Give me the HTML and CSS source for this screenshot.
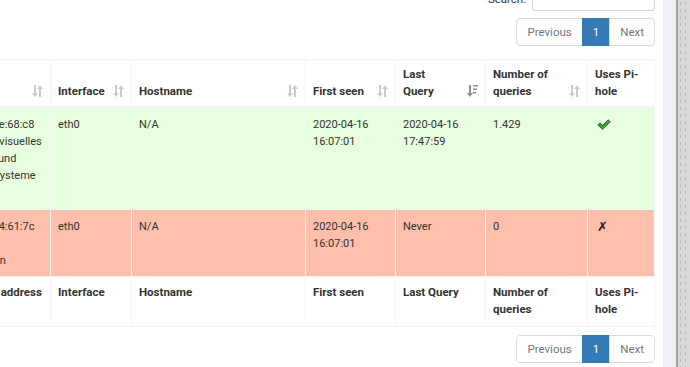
FILE: index.html
```html
<!DOCTYPE html>
<html>
  <head>
    <meta charset="UTF-8">
    <title>Network overview</title>
    <link rel="stylesheet" href="styles.css">
  </head>
  <body>
    <div class="screen">
      <div class="page">
        <div class="filter">
          <label for="search">Search:</label>
          <input type="search" id="search">
        </div>

        <div class="pager-row">
          <div class="pager">
            <span class="page-link">Previous</span>
            <span class="page-link active">1</span>
            <span class="page-link">Next</span>
          </div>
        </div>

        <div class="table-wrap">
          <table class="network">
            <colgroup>
              <col class="c-mac">
              <col class="c-iface">
              <col class="c-host">
              <col class="c-first">
              <col class="c-last">
              <col class="c-count">
              <col class="c-pihole">
            </colgroup>
            <thead>
              <tr>
                <th class="sort">Hardware<br>address
                  <svg class="sort-icon" viewBox="0 0 11 12"><path d="M2 0h2v8h2l-3 4-3-4h2zM7 12h2V4h2L8 0 5 4h2z"/></svg>
                </th>
                <th class="sort">Interface
                  <svg class="sort-icon" viewBox="0 0 11 12"><path d="M2 0h2v8h2l-3 4-3-4h2zM7 12h2V4h2L8 0 5 4h2z"/></svg>
                </th>
                <th class="sort">Hostname
                  <svg class="sort-icon" viewBox="0 0 11 12"><path d="M2 0h2v8h2l-3 4-3-4h2zM7 12h2V4h2L8 0 5 4h2z"/></svg>
                </th>
                <th class="sort">First seen
                  <svg class="sort-icon" viewBox="0 0 11 12"><path d="M2 0h2v8h2l-3 4-3-4h2zM7 12h2V4h2L8 0 5 4h2z"/></svg>
                </th>
                <th class="sort">Last<br>Query
                  <svg class="sort-icon active" viewBox="0 0 11 12"><path d="M2 0h2v8h2l-3 4-3-4h2zM6 0h5v1.6H6zM6 3.4h4V5H6zM6 6.8h3v1.6H6z"/></svg>
                </th>
                <th class="sort">Number of<br>queries
                  <svg class="sort-icon" viewBox="0 0 11 12"><path d="M2 0h2v8h2l-3 4-3-4h2zM7 12h2V4h2L8 0 5 4h2z"/></svg>
                </th>
                <th>Uses Pi-<br>hole</th>
              </tr>
            </thead>
            <tbody>
              <tr class="recent">
                <td class="mac">00:0c:29:4e:68:c8<br>Geräte für visuelles<br>Bild, Töne und<br>Netzwerksysteme</td>
                <td>eth0</td>
                <td>N/A</td>
                <td>2020-04-16<br>16:07:01</td>
                <td>2020-04-16<br>17:47:59</td>
                <td>1.429</td>
                <td>
                  <svg class="yes" viewBox="0 0 13 10"><path d="M0.8 5.4l2-1.9 2.4 2.3L10.3.6l2 1.9-7.1 7z"/></svg>
                </td>
              </tr>
              <tr class="never">
                <td class="mac">00:0c:29:a4:61:7c<br>Intel<br>Corporation</td>
                <td>eth0</td>
                <td>N/A</td>
                <td>2020-04-16<br>16:07:01</td>
                <td>Never</td>
                <td>0</td>
                <td><span class="no">&#x2717;</span></td>
              </tr>
            </tbody>
            <tfoot>
              <tr>
                <th>Hardware address</th>
                <th>Interface</th>
                <th>Hostname</th>
                <th>First seen</th>
                <th>Last Query</th>
                <th>Number of<br>queries</th>
                <th>Uses Pi-<br>hole</th>
              </tr>
            </tfoot>
          </table>
        </div>

        <div class="pager-row bottom">
          <div class="pager">
            <span class="page-link">Previous</span>
            <span class="page-link active">1</span>
            <span class="page-link">Next</span>
          </div>
        </div>
      </div>
      <div class="gutter"></div>
      <div class="edge"></div>
      <div class="texture"></div>
    </div>
  </body>
</html>
```

FILE: styles.css
```css
/* Page frame */
body {
  margin: 0;
  background-color: #ffffff;
  color: #333333;
  font-family: Roboto, 'Liberation Sans', sans-serif;
  font-size: 11px;
  line-height: 17px;
}

.screen {
  display: flex;
  height: 367px;
  overflow: hidden;
}

.page {
  flex: 0 0 662px;
  box-sizing: border-box;
  padding-right: 8px;
  background-color: #ffffff;
}

.gutter {
  flex: 0 0 13px;
  background-color: #edf0f4;
}

.edge {
  flex: 0 0 2px;
  background-color: #a3a3a3;
}

.texture {
  flex: 1;
  background-color: #d9d9d9;
  background-image: radial-gradient(#b8b8b8 0.8px, transparent 1px);
  background-size: 5px 7px;
}

/* Search box */
.filter {
  display: flex;
  justify-content: flex-end;
  align-items: flex-end;
  gap: 6px;
  height: 30px;
  margin-top: -19px;
}

.filter label {
  padding-bottom: 3px;
  font-size: 11.5px;
}

.filter input {
  box-sizing: border-box;
  width: 123px;
  height: 30px;
  border: 1px solid #d2d6de;
  border-radius: 3px;
}

/* Pagination */
.pager-row {
  display: flex;
  justify-content: flex-end;
  margin-top: 7px;
}

.pager-row.bottom {
  margin-top: 8px;
}

.pager {
  display: flex;
}

.page-link {
  box-sizing: border-box;
  height: 28px;
  padding: 0 10px;
  margin-left: -1px;
  line-height: 26px;
  font-size: 11.5px;
  color: #777777;
  border: 1px solid #dddddd;
}

.page-link:first-child {
  border-radius: 4px 0 0 4px;
}

.page-link:last-child {
  border-radius: 0 4px 4px 0;
}

.page-link.active {
  color: #ffffff;
  background-color: #337ab7;
  border-color: #337ab7;
}

/* Network table */
.table-wrap {
  margin-top: 13px;
  margin-left: -60px;
}

.network {
  width: 714px;
  table-layout: fixed;
  border-collapse: collapse;
}

.c-mac { width: 110px; }
.c-iface { width: 81px; }
.c-host { width: 174px; }
.c-first { width: 90px; }
.c-last { width: 90px; }
.c-count { width: 102px; }
.c-pihole { width: 67px; }

.network th,
.network td {
  border: 1px solid #f4f4f4;
  padding: 7px 7px;
  text-align: left;
  vertical-align: top;
  white-space: nowrap;
  overflow: hidden;
}

.network th {
  font-size: 11.5px;
  font-weight: bold;
}

.network thead th {
  position: relative;
  vertical-align: bottom;
  padding-top: 6px;
  padding-bottom: 6px;
  border-bottom-width: 2px;
}

.network thead th.sort {
  padding-right: 24px;
}

.network td {
  padding-top: 8px;
}

.sort-icon {
  position: absolute;
  right: 7px;
  bottom: 9px;
  width: 11px;
  height: 12px;
  fill: #cccccc;
}

.sort-icon.active {
  fill: #8f8f8f;
}

.recent {
  height: 102px;
  background-color: #e7ffde;
}

.never {
  height: 65px;
  background-color: #ffbfaa;
}

.network tfoot tr {
  height: 50px;
}

.yes {
  width: 14px;
  height: 11px;
  margin: 3px 0 0 2px;
  fill: #3aa63a;
  stroke: #1b561b;
  stroke-width: 0.8;
}

.no {
  font-family: 'DejaVu Sans', sans-serif;
  font-size: 13px;
  font-weight: bold;
  color: #222222;
  padding-left: 2px;
}
```
